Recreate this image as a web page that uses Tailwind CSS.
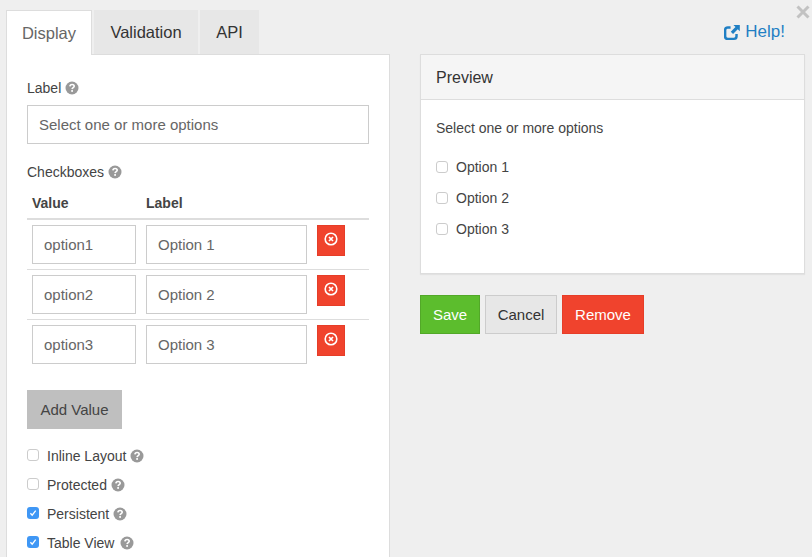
<!DOCTYPE html>
<html>
<head>
    <title>Edit Component</title>
    <meta name="viewport" content="width=device-width, initial-scale=1.0">
    <script src="https://cdn.jsdelivr.net/npm/@tailwindcss/browser@4"></script>
</head>
<body class="bg-[#efefef] h-[557px] overflow-hidden relative font-['Liberation_Sans',Arial,sans-serif] text-[#333]">
    <!-- Close button -->
    <svg class="absolute left-[796px] top-[5px] w-[14px] h-[14px]" viewBox="0 0 14 14"><path d="M1.5 1.5L12.5 12.5M12.5 1.5L1.5 12.5" stroke="#c2c2c2" stroke-width="3"/></svg>

    <div class="flex pl-[6px] pt-[10px] items-start">
        <!-- Left column -->
        <div class="w-[384px] shrink-0">
            <div class="flex h-[45px] text-[16.5px] relative z-10">
                <div class="w-[86px] h-[45px] bg-white border border-[#ddd] border-b-0 flex items-center justify-center text-[#666]">Display</div>
                <div class="w-[104px] h-[44px] ml-[2px] bg-[#e7e7e7] flex items-center justify-center">Validation</div>
                <div class="w-[59px] h-[44px] ml-[2px] bg-[#e7e7e7] flex items-center justify-center">API</div>
            </div>
            <div class="bg-white border border-[#ddd] -mt-px pl-[20px] pr-[19px] pt-[23px] h-[600px]">
                <div class="flex items-center gap-[4px] text-[14px] leading-[20px] h-[20px] text-[#444]">
                    Label
                    <svg class="w-[14px] h-[14px]" viewBox="0 0 14 14"><circle cx="7" cy="7" r="6.5" fill="#999"/><path d="M4.9 5.4C5 4.2 5.9 3.5 7.1 3.5C8.3 3.5 9.2 4.2 9.2 5.2C9.2 6.6 7.2 6.6 7.1 8.1" fill="none" stroke="#fff" stroke-width="1.6"/><rect x="6.2" y="9.1" width="1.8" height="1.7" fill="#fff"/></svg>
                </div>
                <input class="mt-[7px] w-[342px] h-[39px] border border-[#ccc] px-[11px] text-[15px] text-[#666] block" value="Select one or more options">

                <div class="mt-[18px] flex items-center gap-[4px] text-[14px] leading-[20px] h-[20px] text-[#444]">
                    Checkboxes
                    <svg class="w-[14px] h-[14px]" viewBox="0 0 14 14"><circle cx="7" cy="7" r="6.5" fill="#999"/><path d="M4.9 5.4C5 4.2 5.9 3.5 7.1 3.5C8.3 3.5 9.2 4.2 9.2 5.2C9.2 6.6 7.2 6.6 7.1 8.1" fill="none" stroke="#fff" stroke-width="1.6"/><rect x="6.2" y="9.1" width="1.8" height="1.7" fill="#fff"/></svg>
                </div>

                <!-- Values table -->
                <div class="w-[342px] mt-[4px]">
                    <div class="flex h-[34px] border-b-2 border-[#ddd] text-[14px] font-bold text-[#444] pl-[5px] pt-[7px] leading-[20px]">
                        <div class="w-[114px]">Value</div>
                        <div>Label</div>
                    </div>
                    <div class="flex h-[50px] gap-[10px] pl-[5px] pt-[5px] border-b border-[#ddd]">
                        <input class="w-[104px] h-[39px] border border-[#ccc] px-[11px] text-[15px] text-[#666]" value="option1">
                        <input class="w-[161px] h-[39px] border border-[#ccc] px-[11px] text-[15px] text-[#666]" value="Option 1">
                        <button class="w-[28px] h-[31px] bg-[#f0432d] border border-[#e63d28] flex justify-center pt-[6px]">
                            <svg class="w-[14px] h-[14px]" viewBox="0 0 14 14"><circle cx="7" cy="7" r="5.8" fill="none" stroke="#fff" stroke-width="1.6"/><path d="M5 5L9 9M9 5L5 9" stroke="#fff" stroke-width="1.7"/></svg>
                        </button>
                    </div>
                    <div class="flex h-[50px] gap-[10px] pl-[5px] pt-[5px] border-b border-[#ddd]">
                        <input class="w-[104px] h-[39px] border border-[#ccc] px-[11px] text-[15px] text-[#666]" value="option2">
                        <input class="w-[161px] h-[39px] border border-[#ccc] px-[11px] text-[15px] text-[#666]" value="Option 2">
                        <button class="w-[28px] h-[31px] bg-[#f0432d] border border-[#e63d28] flex justify-center pt-[6px]">
                            <svg class="w-[14px] h-[14px]" viewBox="0 0 14 14"><circle cx="7" cy="7" r="5.8" fill="none" stroke="#fff" stroke-width="1.6"/><path d="M5 5L9 9M9 5L5 9" stroke="#fff" stroke-width="1.7"/></svg>
                        </button>
                    </div>
                    <div class="flex h-[50px] gap-[10px] pl-[5px] pt-[5px]">
                        <input class="w-[104px] h-[39px] border border-[#ccc] px-[11px] text-[15px] text-[#666]" value="option3">
                        <input class="w-[161px] h-[39px] border border-[#ccc] px-[11px] text-[15px] text-[#666]" value="Option 3">
                        <button class="w-[28px] h-[31px] bg-[#f0432d] border border-[#e63d28] flex justify-center pt-[6px]">
                            <svg class="w-[14px] h-[14px]" viewBox="0 0 14 14"><circle cx="7" cy="7" r="5.8" fill="none" stroke="#fff" stroke-width="1.6"/><path d="M5 5L9 9M9 5L5 9" stroke="#fff" stroke-width="1.7"/></svg>
                        </button>
                    </div>
                </div>

                <button class="mt-[20px] block w-[95px] h-[39px] pt-[1px] bg-[#bfbfbf] text-[15px] text-[#444]">Add Value</button>

                <!-- Options -->
                <div class="mt-[17px] flex flex-col gap-[9px] text-[14px] text-[#444] leading-[20px]">
                    <div class="flex items-center h-[20px]">
                        <span class="w-[12px] h-[12px] rounded-[3px] border border-[#ccc] -mt-[3px] mr-[8px]"></span>Inline Layout
                        <svg class="ml-[4px] w-[14px] h-[14px]" viewBox="0 0 14 14"><circle cx="7" cy="7" r="6.5" fill="#999"/><path d="M4.9 5.4C5 4.2 5.9 3.5 7.1 3.5C8.3 3.5 9.2 4.2 9.2 5.2C9.2 6.6 7.2 6.6 7.1 8.1" fill="none" stroke="#fff" stroke-width="1.6"/><rect x="6.2" y="9.1" width="1.8" height="1.7" fill="#fff"/></svg>
                    </div>
                    <div class="flex items-center h-[20px]">
                        <span class="w-[12px] h-[12px] rounded-[3px] border border-[#ccc] -mt-[3px] mr-[8px]"></span>Protected
                        <svg class="ml-[4px] w-[14px] h-[14px]" viewBox="0 0 14 14"><circle cx="7" cy="7" r="6.5" fill="#999"/><path d="M4.9 5.4C5 4.2 5.9 3.5 7.1 3.5C8.3 3.5 9.2 4.2 9.2 5.2C9.2 6.6 7.2 6.6 7.1 8.1" fill="none" stroke="#fff" stroke-width="1.6"/><rect x="6.2" y="9.1" width="1.8" height="1.7" fill="#fff"/></svg>
                    </div>
                    <div class="flex items-center h-[20px]">
                        <span class="w-[12px] h-[12px] rounded-[3px] bg-[#3f97f5] -mt-[3px] mr-[8px] flex items-center justify-center">
                            <svg class="w-[12px] h-[12px]" viewBox="0 0 12 12"><path d="M3.4 6.2L5.2 8.2L8.7 3.6" fill="none" stroke="#fff" stroke-width="1.3"/></svg>
                        </span>Persistent
                        <svg class="ml-[4px] w-[14px] h-[14px]" viewBox="0 0 14 14"><circle cx="7" cy="7" r="6.5" fill="#999"/><path d="M4.9 5.4C5 4.2 5.9 3.5 7.1 3.5C8.3 3.5 9.2 4.2 9.2 5.2C9.2 6.6 7.2 6.6 7.1 8.1" fill="none" stroke="#fff" stroke-width="1.6"/><rect x="6.2" y="9.1" width="1.8" height="1.7" fill="#fff"/></svg>
                    </div>
                    <div class="flex items-center h-[20px]">
                        <span class="w-[12px] h-[12px] rounded-[3px] bg-[#3f97f5] -mt-[3px] mr-[8px] flex items-center justify-center">
                            <svg class="w-[12px] h-[12px]" viewBox="0 0 12 12"><path d="M3.4 6.2L5.2 8.2L8.7 3.6" fill="none" stroke="#fff" stroke-width="1.3"/></svg>
                        </span>Table View
                        <svg class="ml-[6px] w-[14px] h-[14px]" viewBox="0 0 14 14"><circle cx="7" cy="7" r="6.5" fill="#999"/><path d="M4.9 5.4C5 4.2 5.9 3.5 7.1 3.5C8.3 3.5 9.2 4.2 9.2 5.2C9.2 6.6 7.2 6.6 7.1 8.1" fill="none" stroke="#fff" stroke-width="1.6"/><rect x="6.2" y="9.1" width="1.8" height="1.7" fill="#fff"/></svg>
                    </div>
                </div>
            </div>
        </div>

        <!-- Right column -->
        <div class="w-[385px] ml-[30px] shrink-0">
            <div class="h-[44px] flex items-center justify-end pr-[20px] text-[17px] text-[#1f7fc4] gap-[5px]">
                <svg class="w-[16px] h-[17px]" viewBox="0 0 17 17"><path d="M7 3.2H4C2.4 3.2 1.2 4.4 1.2 6V12.5C1.2 14.1 2.4 15.3 4 15.3H10.5C12.1 15.3 13.3 14.1 13.3 12.5V10" fill="none" stroke="#1f7fc4" stroke-width="2.6"/><path d="M10 0.5H16.8V7.3L14.6 5.1L9.6 10.1L7.2 7.7L12.2 2.7Z" fill="#1f7fc4"/></svg>
                Help!
            </div>
            <div class="bg-white border border-[#ddd] h-[220px] shadow-[0_1px_1px_rgba(0,0,0,0.05)]">
                <div class="h-[45px] bg-[#f5f5f5] border-b border-[#ddd] flex items-center pl-[15px] pt-[1px] text-[16px]">Preview</div>
                <div class="pl-[15px] pt-[18px] text-[14px] text-[#444]">
                    <div class="leading-[20px] h-[20px]">Select one or more options</div>
                    <div class="mt-[19px] flex flex-col gap-[11px] leading-[20px]">
                        <div class="flex items-center h-[20px]"><span class="w-[12px] h-[12px] rounded-[3px] border border-[#ccc] mr-[8px]"></span>Option 1</div>
                        <div class="flex items-center h-[20px]"><span class="w-[12px] h-[12px] rounded-[3px] border border-[#ccc] mr-[8px]"></span>Option 2</div>
                        <div class="flex items-center h-[20px]"><span class="w-[12px] h-[12px] rounded-[3px] border border-[#ccc] mr-[8px]"></span>Option 3</div>
                    </div>
                </div>
            </div>
            <div class="mt-[21px] flex gap-[5px] text-[15px]">
                <button class="w-[60px] h-[39px] pt-[1px] bg-[#5cbd2d] border border-[#52a828] text-white">Save</button>
                <button class="w-[72px] h-[39px] pt-[1px] bg-[#e7e7e7] border border-[#ccc] text-[#333]">Cancel</button>
                <button class="w-[82px] h-[39px] pt-[1px] bg-[#f0432d] border border-[#e63d28] text-white">Remove</button>
            </div>
        </div>
    </div>
</body>
</html>
